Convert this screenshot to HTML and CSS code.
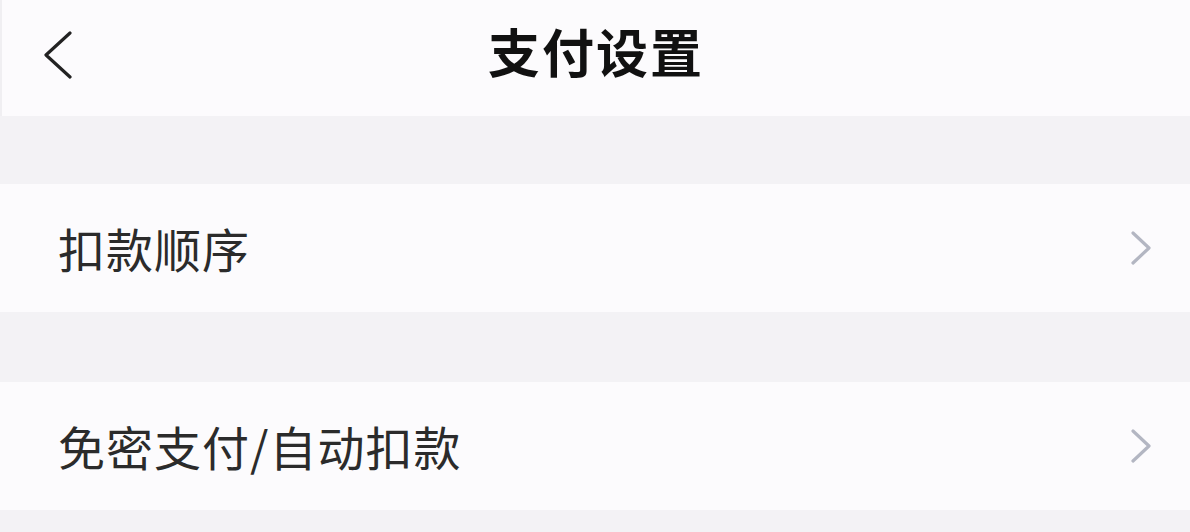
FILE: index.html
```html
<!DOCTYPE html>
<html lang="zh-CN">
<head>
  <meta charset="UTF-8" />
  <title>支付设置</title>
  <link rel="stylesheet" href="styles.css">
</head>
<body>
  <!-- 顶部导航栏 -->
  <div class="nav-bar">
    <a class="back" href="#">
      <svg width="30" height="48" viewBox="0 0 30 48">
        <polyline points="27,2 3,24 27,46" fill="none" stroke="#222" stroke-width="3.2" stroke-linecap="round" stroke-linejoin="round" />
      </svg>
    </a>
    <h1 class="title">支付设置</h1>
  </div>

  <div class="gap"></div>

  <!-- 设置项 -->
  <a class="cell" href="#">
    <span class="cell-text">扣款顺序</span>
    <svg class="arrow" width="22" height="34" viewBox="0 0 22 34">
      <polyline points="3,2 19,17 3,32" fill="none" stroke="#b3b6c2" stroke-width="3.2" stroke-linecap="round" stroke-linejoin="round" />
    </svg>
  </a>

  <div class="gap"></div>

  <a class="cell" href="#">
    <span class="cell-text">免密支付/自动扣款</span>
    <svg class="arrow" width="22" height="34" viewBox="0 0 22 34">
      <polyline points="3,2 19,17 3,32" fill="none" stroke="#b3b6c2" stroke-width="3.2" stroke-linecap="round" stroke-linejoin="round" />
    </svg>
  </a>

  <div class="gap gap-end"></div>
</body>
</html>
```

FILE: styles.css
```css
body {
  margin: 0;
  background-color: #f3f2f5;
  font-family: "Noto Sans CJK SC", "Noto Sans", sans-serif;
  overflow: hidden;
}

.nav-bar {
  height: 116px;
  background-color: #fcfbfd;
  border-left: 2px solid #f0eff2;
  display: flex;
  align-items: center;
  justify-content: center;
  position: relative;
}

.back {
  position: absolute;
  left: 41px;
  top: 31px;
  display: block;
  line-height: 0;
}

.title {
  margin: 0;
  font-size: 52px;
  font-weight: bold;
  color: #111;
  letter-spacing: 2px;
  line-height: 1;
  margin-top: -14px;
}

.gap {
  height: 68px;
}

.cell {
  height: 128px;
  background-color: #fcfbfd;
  display: flex;
  align-items: center;
  justify-content: space-between;
  padding: 0 38px 0 58px;
  text-decoration: none;
}

.cell + .gap {
  height: 70px;
}

.cell + .gap-end {
  height: 22px;
}

.cell-text {
  font-size: 47px;
  color: #2b2b2b;
  letter-spacing: 1px;
  line-height: 1;
  margin-top: -2px;
}

.arrow {
  display: block;
}
```
